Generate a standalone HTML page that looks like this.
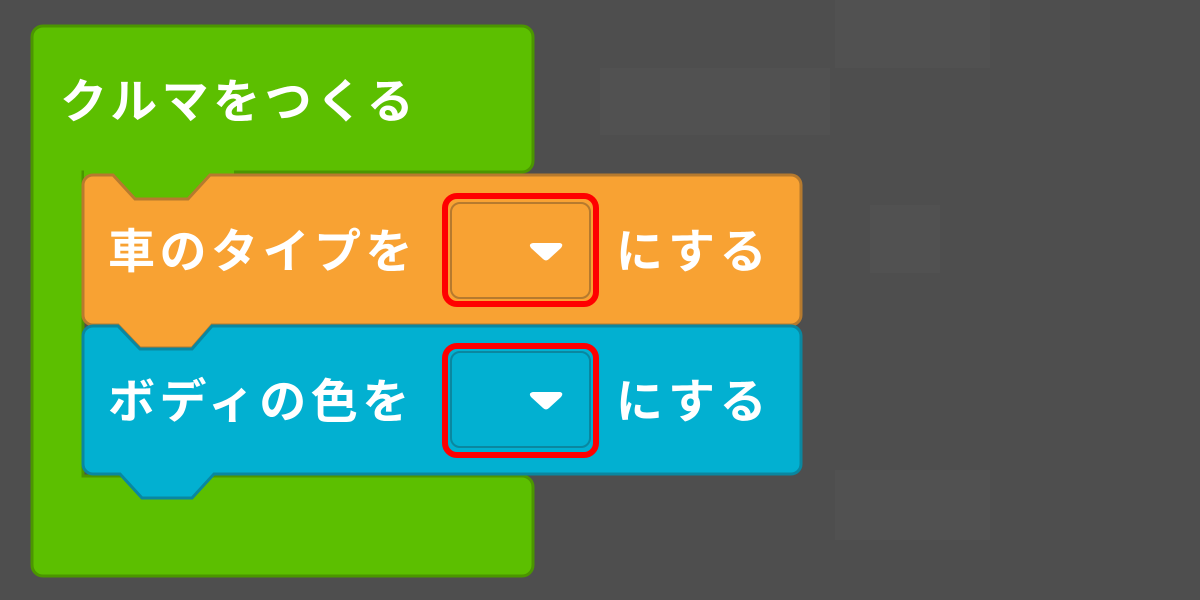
<!DOCTYPE html>
<html><head><meta charset="utf-8"><style>
html,body{margin:0;padding:0;background:#4e4e4e;width:1200px;height:600px;overflow:hidden}
svg{display:block}
text{font-family:"Liberation Sans","Noto Sans CJK JP",sans-serif;font-weight:bold;fill:#fff;font-size:47px;letter-spacing:4.5px}
</style></head><body>
<svg width="1200" height="600" viewBox="0 0 1200 600">
<rect width="1200" height="600" fill="#4e4e4e"/>
<g fill="#515151">
<rect x="835" y="0" width="155" height="68"/>
<rect x="600" y="68" width="230" height="67"/>
<rect x="870" y="205" width="70" height="68"/>
<rect x="835" y="470" width="155" height="70"/>
</g>
<path d="M43,26 H522 a11 11 0 0 1 11 11 V161 a11 11 0 0 1 -11 11 H83 V476 H522 a11 11 0 0 1 11 11 V565 a11 11 0 0 1 -11 11 H43 a11 11 0 0 1 -11 -11 V37 a11 11 0 0 1 11 -11 z" fill="#5cbf00" stroke="#4b9600" stroke-width="3"/>
<rect x="84" y="150" width="150" height="60" fill="#5cbf00"/>
<path d="M93,175 H113 L135,199 H188 L210,175 H791 a10 10 0 0 1 10 10 V315 a10 10 0 0 1 -10 10 H212 L192,348 H140 L118,325 H93 a10 10 0 0 1 -10 -10 V185 a10 10 0 0 1 10 -10 z" fill="#f8a233" stroke="#b67a2e" stroke-width="3"/>
<path d="M93,326 H118 L140,349 H192 L212,326 H791 a10 10 0 0 1 10 10 V464 a10 10 0 0 1 -10 10 H214 L192,498 H142 L120,474 H93 a10 10 0 0 1 -10 -10 V336 a10 10 0 0 1 10 -10 z" fill="#02b0d1" stroke="#0a87a0" stroke-width="3"/>
<text x="60" y="118">クルマをつくる</text>
<text x="108" y="268">車のタイプを</text>
<text x="616" y="268">にする</text>
<text x="108" y="418">ボディの色を</text>
<text x="616" y="418">にする</text>
<rect x="451" y="203" width="139" height="95" rx="9" fill="#f8a233" stroke="#b67a2e" stroke-width="2"/>
<rect x="451" y="352" width="139" height="95" rx="9" fill="#02b0d1" stroke="#0a87a0" stroke-width="2"/>
<path d="M533,243 H560 Q564,244 561,248 L549,259 Q546,262 543,259 L531,248 Q528,244 533,243 z" fill="#fff"/>
<path d="M533,392 H560 Q564,393 561,397 L549,408 Q546,411 543,408 L531,397 Q528,393 533,392 z" fill="#fff"/>
<rect x="445" y="196" width="151" height="108" rx="12" fill="none" stroke="#ff0000" stroke-width="6"/>
<rect x="445" y="346" width="151" height="109" rx="12" fill="none" stroke="#ff0000" stroke-width="6"/>
</svg>
</body></html>
